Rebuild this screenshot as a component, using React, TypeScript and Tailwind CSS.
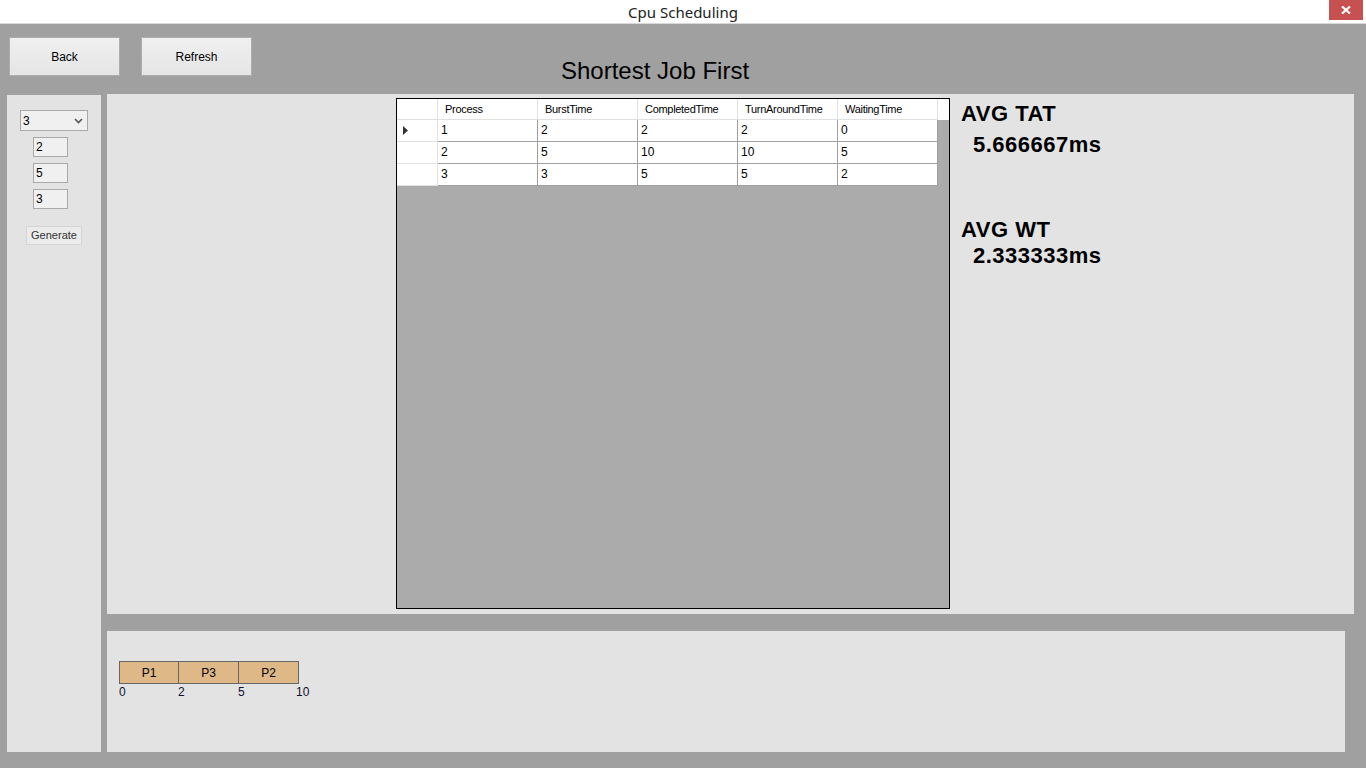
import React from "react";

const rows = [
  ["1", "2", "2", "2", "0"],
  ["2", "5", "10", "10", "5"],
  ["3", "3", "5", "5", "2"],
];

const headers = ["Process", "BurstTime", "CompletedTime", "TurnAroundTime", "WaitingTime"];

const gantt = ["P1", "P3", "P2"];
const ticks = [
  { label: "0", w: "w-[59px]" },
  { label: "2", w: "w-[60px]" },
  { label: "5", w: "w-[58px]" },
  { label: "10", w: "w-[20px]" },
];

const WinButton = ({ label }: { label: string }) => (
  <button className="w-[111px] h-[39px] border border-[#adadad] bg-gradient-to-b from-[#f0f0f0] to-[#e5e5e5] text-[12px] text-black">
    {label}
  </button>
);

const TextBox = ({ value }: { value: string }) => (
  <div className="w-[35px] h-[20px] border border-[#a9a9a9] bg-[#f0f0f0] pl-[2px] text-[12px] leading-[18px] text-black">
    {value}
  </div>
);

export default function App() {
  return (
    <div
      className="w-[1366px] h-[768px] bg-[#a0a0a0] flex flex-col overflow-hidden"
      style={{ fontFamily: '"Liberation Sans", Arial, sans-serif' }}
    >
      {/* title bar */}
      <div className="h-[24px] bg-white border-b border-[#d9d9d9] grid grid-cols-[37px_1fr_37px]">
        <div />
        <div
          className="text-center text-[15px] leading-[24px] text-[#222]"
          style={{ fontFamily: '"Noto Sans", sans-serif' }}
        >
          Cpu Scheduling
        </div>
        <div className="flex justify-start">
          <div className="w-[34px] h-[20px] bg-[#c75050] flex items-center justify-center">
            <svg width="10" height="8" viewBox="0 0 10 8">
              <path d="M1 0.5 L9 7.5 M9 0.5 L1 7.5" stroke="white" strokeWidth="2.2" />
            </svg>
          </div>
        </div>
      </div>

      {/* toolbar */}
      <div className="h-[70px] flex items-start pl-[9px] pt-[13px]">
        <WinButton label="Back" />
        <div className="ml-[21px]">
          <WinButton label="Refresh" />
        </div>
        <div className="ml-[309px] mt-[20px] text-[24px] leading-[28px] text-black">Shortest Job First</div>
      </div>

      {/* body */}
      <div className="flex pl-[7px] gap-[6px]">
        <div className="w-[94px] h-[657px] mt-[1px] bg-[#e3e3e3] flex flex-col">
          <div className="ml-[13px] mt-[15px] w-[68px] h-[21px] border border-[#a9a9a9] bg-[#f0f0f0] flex items-center justify-between pl-[2px] pr-[4px] text-[12px] text-black">
            <span>3</span>
            <svg width="9" height="6" viewBox="0 0 9 6">
              <path d="M1 1 L4.5 4.5 L8 1" fill="none" stroke="#555" strokeWidth="1.6" />
            </svg>
          </div>
          <div className="ml-[26px] mt-[6px] flex flex-col gap-[6px]">
            <TextBox value="2" />
            <TextBox value="5" />
            <TextBox value="3" />
          </div>
          <button className="ml-[19px] mt-[17px] w-[56px] h-[19px] border border-[#d5d5d5] bg-[#ebebeb] text-[11px] text-[#333]">
            Generate
          </button>
        </div>

        <div className="flex flex-col gap-[17px]">
          {/* main panel */}
          <div className="w-[1247px] h-[520px] bg-[#e3e3e3] flex items-start">
            <div className="ml-[289px] mt-[4px] w-[554px] h-[511px] border border-black bg-[#ababab] text-[11px] text-black">
              <div className="flex h-[21px] bg-white">
                <div className="w-[41px] border-r border-b border-[#e0e0e0]" />
                {headers.map((h) => (
                  <div
                    key={h}
                    className="w-[100px] border-r border-b border-[#e0e0e0] pl-[7px] leading-[20px] tracking-[-0.3px]"
                  >
                    {h}
                  </div>
                ))}
              </div>
              {rows.map((r, i) => (
                <div key={i} className="flex h-[22px]">
                  <div className="w-[41px] bg-white border-r border-b border-[#e0e0e0] flex items-center pl-[6px]">
                    {i === 0 && (
                      <svg width="5" height="9" viewBox="0 0 5 9">
                        <path d="M0 0 L5 4.5 L0 9 Z" fill="#333" />
                      </svg>
                    )}
                  </div>
                  {r.map((c, j) => (
                    <div
                      key={j}
                      className="w-[100px] bg-white border-r border-b border-[#a0a0a0] pl-[3px] leading-[21px] text-[12px]"
                    >
                      {c}
                    </div>
                  ))}
                </div>
              ))}
            </div>
            <div className="ml-[11px] mt-[8px] flex flex-col font-bold text-black text-[22px] leading-[24px] tracking-[0.5px]">
              <div>AVG TAT</div>
              <div className="ml-[12px] mt-[7px]">5.666667ms</div>
              <div className="mt-[61px]">AVG WT</div>
              <div className="ml-[12px] mt-[2px]">2.333333ms</div>
            </div>
          </div>

          {/* gantt panel */}
          <div className="w-[1238px] h-[121px] bg-[#e3e3e3] pl-[12px] pt-[30px]">
            <div className="flex">
              {gantt.map((p, i) => (
                <div
                  key={p}
                  className={
                    "w-[60px] h-[23px] bg-[#deb887] border-y border-r border-[#666] flex items-center justify-center text-[12px] text-black " +
                    (i === 0 ? "border-l" : "")
                  }
                >
                  {p}
                </div>
              ))}
            </div>
            <div className="flex mt-[1px] text-[12px] leading-[14px] text-[#101030]">
              {ticks.map((t) => (
                <div key={t.label} className={t.w}>
                  {t.label}
                </div>
              ))}
            </div>
          </div>
        </div>
      </div>
    </div>
  );
}
